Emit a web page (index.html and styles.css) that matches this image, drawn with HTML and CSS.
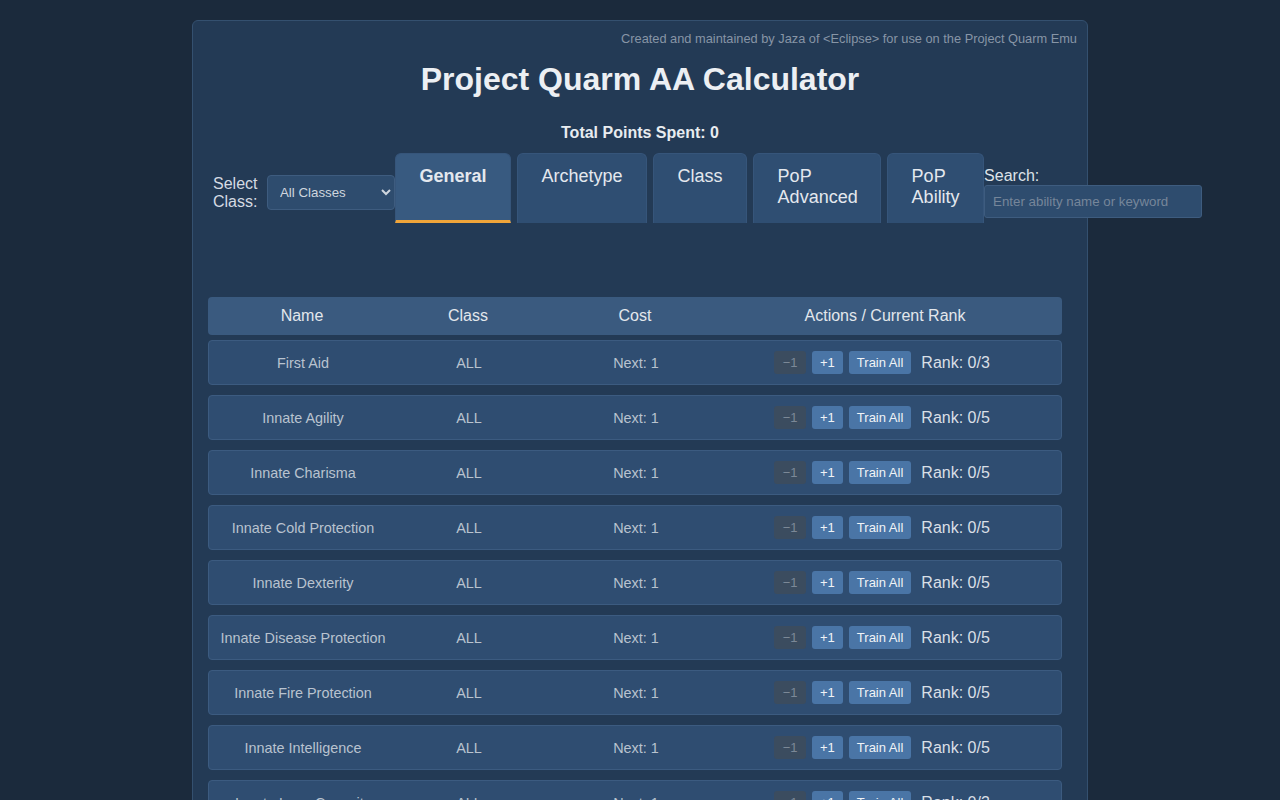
FILE: index.html
```html
<!DOCTYPE html>
<html lang="en">
<head>
  <meta charset="utf-8">
  <title>Project Quarm AA Calculator</title>
  <link rel="stylesheet" href="styles.css">
</head>
<body>
  <div class="container">
    <div class="credits">Created and maintained by Jaza of &lt;Eclipse&gt; for use on the Project Quarm Emu</div>
    <h1>Project Quarm AA Calculator</h1>
    <div class="total">Total Points Spent: <span id="totalPoints">0</span></div>

    <div class="controls">
      <label class="class-label" for="classSelect">Select Class:</label>
      <select id="classSelect" class="class-select">
        <option>All Classes</option>
        <option>Bard</option>
        <option>Beastlord</option>
        <option>Cleric</option>
        <option>Druid</option>
        <option>Enchanter</option>
        <option>Magician</option>
        <option>Monk</option>
        <option>Necromancer</option>
        <option>Paladin</option>
        <option>Ranger</option>
        <option>Rogue</option>
        <option>Shadow Knight</option>
        <option>Shaman</option>
        <option>Warrior</option>
        <option>Wizard</option>
      </select>

      <div class="tabs">
        <button class="tab active">General</button>
        <button class="tab">Archetype</button>
        <button class="tab">Class</button>
        <button class="tab pop-adv">PoP Advanced</button>
        <button class="tab pop-ab">PoP Ability</button>
      </div>

      <div class="search">
        <label for="searchBox">Search:</label>
        <input id="searchBox" type="text" placeholder="Enter ability name or keyword">
      </div>
    </div>

    <div class="aa-table">
      <div class="aa-head">
        <div>Name</div>
        <div>Class</div>
        <div>Cost</div>
        <div>Actions / Current Rank</div>
      </div>
      <div id="aaRows"></div>
    </div>
  </div>

<script>
  const abilities = [
    ["First Aid", 3],
    ["Innate Agility", 5],
    ["Innate Charisma", 5],
    ["Innate Cold Protection", 5],
    ["Innate Dexterity", 5],
    ["Innate Disease Protection", 5],
    ["Innate Fire Protection", 5],
    ["Innate Intelligence", 5],
    ["Innate Lung Capacity", 3],
    ["Innate Magic Protection", 5],
    ["Innate Metabolism", 3],
    ["Innate Poison Protection", 5],
    ["Innate Regeneration", 3],
    ["Innate Run Speed", 3],
    ["Innate Stamina", 5],
    ["Innate Strength", 5],
    ["Innate Wisdom", 5]
  ];

  const rows = document.getElementById("aaRows");
  abilities.forEach(([name, max]) => {
    const row = document.createElement("div");
    row.className = "aa-row";
    row.innerHTML =
      '<div>' + name + '</div>' +
      '<div>ALL</div>' +
      '<div>Next: 1</div>' +
      '<div class="actions">' +
        '<button class="btn minus" disabled>\u22121</button>' +
        '<button class="btn">+1</button>' +
        '<button class="btn">Train All</button>' +
        '<span class="rank">Rank: 0/' + max + '</span>' +
      '</div>';
    rows.appendChild(row);
  });
</script>
</body>
</html>
```

FILE: styles.css
```css
* {
  box-sizing: border-box;
}

body {
  margin: 0;
  padding: 20px 0;
  background: #1b2a3c;
  color: #e8ecf0;
  font-family: "Liberation Sans", Arial, sans-serif;
}

.container {
  width: 896px;
  margin: 0 auto;
  padding: 10px 15px 20px;
  background: #233a55;
  border: 1px solid #34506f;
  border-radius: 6px;
}

.credits {
  text-align: right;
  font-size: 12.8px;
  color: #8795a6;
  margin-right: -5px;
}

h1 {
  margin: 15px 0 26px;
  text-align: center;
  font-size: 32px;
  color: #eceff3;
}

.total {
  text-align: center;
  font-weight: bold;
  font-size: 16px;
  margin-bottom: 11px;
}

.controls {
  display: flex;
  align-items: center;
  padding-left: 5px;
  margin-bottom: 65px;
}

.controls > * {
  flex-shrink: 0;
}

.class-label {
  width: 46px;
  margin-right: 8px;
  font-size: 16px;
  line-height: 18px;
  color: #d5dbe3;
}

.class-select {
  width: 128px;
  height: 35px;
  padding: 0 8px;
  font-family: inherit;
  font-size: 13.3px;
  color: #cfd6de;
  background: #2e4c6e;
  border: 1px solid #3e5c7f;
  border-radius: 4px;
}

.tabs {
  display: flex;
  gap: 6px;
  padding-bottom: 9px;
}

.tab {
  height: 70px;
  padding: 12px 23.5px 0;
  display: flex;
  align-items: flex-start;
  text-align: left;
  font-family: inherit;
  font-size: 18px;
  line-height: 21px;
  color: #e4e8ee;
  background: #2f4e72;
  border: 1px solid #36557a;
  border-bottom: none;
  border-radius: 6px 6px 0 0;
  cursor: pointer;
}

.tab.active {
  background: #385a80;
  font-weight: bold;
  border-bottom: 3px solid #f0a53a;
}

.tab.pop-adv {
  width: 128px;
}

.tab.pop-ab {
  width: 97px;
}

.search {
  display: flex;
  flex-direction: column;
  font-size: 16px;
  color: #dde2e8;
}

.search input {
  width: 218px;
  height: 33px;
  padding: 0 8px;
  font-family: inherit;
  font-size: 13.3px;
  color: #dde2e8;
  background: #2e4c6e;
  border: 1px solid #3e5c7f;
  border-radius: 3px;
}

.search input::placeholder {
  color: #76869a;
}

.aa-table {
  width: 854px;
}

.aa-head,
.aa-row {
  display: grid;
  grid-template-columns: 188px 144px 190px 310px;
  align-items: center;
  text-align: center;
}

.aa-head {
  height: 38px;
  margin-bottom: 5px;
  background: #3a5a7f;
  border-radius: 4px;
  font-size: 16px;
  color: #e3e7ec;
}

.aa-row {
  height: 45px;
  margin-bottom: 10px;
  background: #2f4d71;
  border: 1px solid #3c5b80;
  border-radius: 4px;
  font-size: 14.4px;
  color: #b9c3cf;
}

.actions {
  display: flex;
  align-items: center;
  justify-content: center;
  gap: 6px;
  padding-right: 8px;
}

.btn {
  height: 23px;
  padding: 0 8px;
  font-family: inherit;
  font-size: 13px;
  color: #f0f3f6;
  background: #4a75a6;
  border: none;
  border-radius: 3px;
  cursor: pointer;
}

.btn.minus {
  padding: 0 8.5px;
  background: #3b4c5f;
  color: #7b8897;
  cursor: default;
}

.rank {
  margin-left: 4px;
  font-size: 16px;
  color: #d9dfe6;
}
```
